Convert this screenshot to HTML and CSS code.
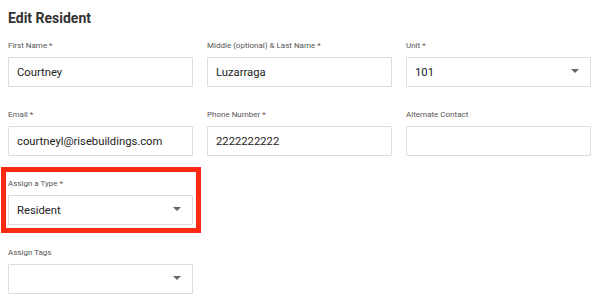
FILE: index.html
```html
<!DOCTYPE html>
<html lang="en">
<head>
    <meta charset="UTF-8">
    <meta name="viewport" content="width=device-width, initial-scale=1.0">
    <title>Edit Resident</title>
    <link rel="stylesheet" href="styles.css">
</head>
<body>
    <div class="panel">
        <h2 class="panel-title">Edit Resident</h2>

        <div class="form-grid">
            <div class="field">
                <label>First Name *</label>
                <input type="text" value="Courtney">
            </div>
            <div class="field">
                <label>Middle (optional) &amp; Last Name *</label>
                <input type="text" value="Luzarraga">
            </div>
            <div class="field">
                <label>Unit *</label>
                <div class="select">
                    <span>101</span>
                    <span class="caret"></span>
                </div>
            </div>

            <div class="field">
                <label>Email *</label>
                <input type="text" value="courtneyl@risebuildings.com">
            </div>
            <div class="field">
                <label>Phone Number *</label>
                <input type="text" value="2222222222">
            </div>
            <div class="field">
                <label>Alternate Contact</label>
                <input type="text" value="">
            </div>

            <!-- highlighted field -->
            <div class="field highlight">
                <label>Assign a Type *</label>
                <div class="select">
                    <span>Resident</span>
                    <span class="caret"></span>
                </div>
            </div>

            <div class="field new-row">
                <label>Assign Tags</label>
                <div class="select">
                    <span></span>
                    <span class="caret"></span>
                </div>
            </div>
        </div>
    </div>
</body>
</html>
```

FILE: styles.css
```css
body {
    margin: 0;
    background-color: #fff;
    font-family: Roboto, "Liberation Sans", Arial, sans-serif;
    color: #222;
}

.panel {
    padding: 9px 8px 0 8px;
}

.panel-title {
    margin: 0 0 13px 0;
    font-size: 14px;
    line-height: 18px;
    font-weight: bold;
    color: #333;
}

.form-grid {
    display: grid;
    grid-template-columns: repeat(3, 185px);
    column-gap: 14px;
    row-gap: 22px;
}

.field {
    display: flex;
    flex-direction: column;
}

.field label {
    font-size: 8px;
    line-height: 12px;
    color: #555;
    margin-bottom: 5px;
}

.field input,
.select {
    box-sizing: border-box;
    height: 30px;
    width: 100%;
    border: 1px solid #dcdcdc;
    border-radius: 1px;
    padding: 0 8px;
    font-family: Roboto, "Liberation Sans", Arial, sans-serif;
    font-size: 11.25px;
    color: #222;
    background-color: #fff;
    outline: none;
}

.select {
    display: flex;
    align-items: center;
    justify-content: space-between;
    padding-right: 11px;
}

.caret {
    width: 0;
    height: 0;
    border-left: 4px solid transparent;
    border-right: 4px solid transparent;
    border-top: 4px solid #666;
    margin-top: -2px;
}

/* red annotation box round the type field */
.field.highlight {
    border: 5px solid #fb2a12;
    padding: 6px 3px 3px 2px;
    margin: -11px -8px -8px -7px;
}

.field.new-row {
    grid-column: 1;
}
```
